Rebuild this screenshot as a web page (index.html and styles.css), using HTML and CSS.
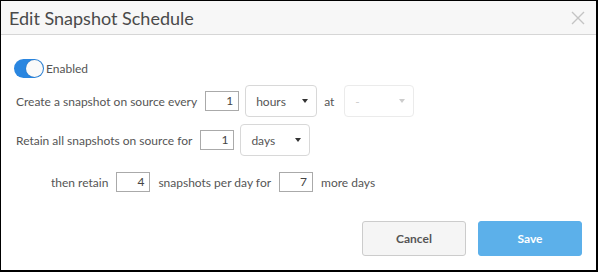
FILE: index.html
```html
<!DOCTYPE html>
<html lang="en">
<head>
    <meta charset="UTF-8">
    <title>Edit Snapshot Schedule</title>
    <link rel="stylesheet" href="styles.css">
</head>
<body>
    <div class="modal">
        <div class="modal-header">
            <div class="modal-title">Edit Snapshot Schedule</div>
            <div class="close">
                <svg width="14" height="14" viewBox="0 0 14 14"><path d="M1 1L13 13M13 1L1 13" stroke="#c4c4c4" stroke-width="1.4" fill="none"/></svg>
            </div>
        </div>
        <div class="modal-body">
            <div class="toggle-row">
                <div class="toggle"><div class="knob"></div></div>
                <span>Enabled</span>
            </div>
            <div class="row">
                <span>Create a snapshot on source every</span>
                <div class="num">1</div>
                <div class="select">hours <span class="caret"></span></div>
                <span class="at">at</span>
                <div class="select disabled">- <span class="caret"></span></div>
            </div>
            <div class="row row-retain">
                <span>Retain all snapshots on source for</span>
                <div class="num">1</div>
                <div class="select narrow">days <span class="caret"></span></div>
            </div>
            <div class="row row-then">
                <span>then retain</span>
                <div class="num">4</div>
                <span>snapshots per day for</span>
                <div class="num">7</div>
                <span>more days</span>
            </div>
        </div>
        <div class="modal-footer">
            <button class="btn btn-cancel">Cancel</button>
            <button class="btn btn-save">Save</button>
        </div>
    </div>
</body>
</html>
```

FILE: styles.css
```css
body {
    margin: 0;
    width: 598px;
    height: 272px;
    background: #000;
    font-family: 'Lato', sans-serif;
    color: #555;
}
.modal {
    margin: 1px 2px 2px 1px;
    height: 269px;
    background: #fff;
    display: flex;
    flex-direction: column;
}
.modal-header {
    height: 33px;
    background: #f7f7f7;
    border-bottom: 1px solid #d6d6d6;
    display: flex;
    align-items: center;
    justify-content: space-between;
    padding: 0 10px 0 8px;
}
.modal-title {
    font-size: 18px;
    color: #4a4a4a;
}
.close {
    display: flex;
    padding-right: 1px;
}
.modal-body {
    padding: 24px 0 0 13px;
    font-size: 12px;
}
.toggle-row {
    display: flex;
    align-items: center;
    gap: 2px;
    color: #555;
}
.toggle {
    width: 30px;
    height: 19px;
    border-radius: 10px;
    background: #2a86e0;
    position: relative;
}
.knob {
    position: absolute;
    right: 1px;
    top: 1px;
    width: 17px;
    height: 17px;
    border-radius: 50%;
    background: #fafafa;
    box-shadow: 0 0 1px rgba(0,0,0,0.3);
}
.row {
    display: flex;
    align-items: center;
    margin-top: 7px;
    padding-left: 2px;
}
.num {
    width: 27px;
    height: 18px;
    border: 1px solid #aaa;
    text-align: right;
    padding-right: 5px;
    line-height: 18px;
    color: #444;
    margin: 0 6px 0 8px;
}
.select {
    width: 52px;
    height: 30px;
    border: 1px solid #d8d8d8;
    border-radius: 4px;
    padding: 0 8px 0 10px;
    display: flex;
    align-items: center;
    justify-content: space-between;
    color: #555;
}
.caret {
    width: 0;
    height: 0;
    border-left: 3.5px solid transparent;
    border-right: 3.5px solid transparent;
    border-top: 4px solid #333;
}
.at {
    margin: 0 10px 0 7px;
}
.select.disabled {
    width: 50px;
    border-color: #ebebeb;
    color: #ccc;
}
.select.disabled .caret {
    border-top-color: #ccc;
}
.row-retain {
    margin-top: 7px;
}
.select.narrow {
    width: 50px;
}
.row-then {
    margin-top: 16px;
    padding-left: 37px;
}
.row-then .num {
    margin: 0 8px 0 8px;
}
.modal-footer {
    margin-top: auto;
    display: flex;
    justify-content: flex-end;
    gap: 12px;
    padding: 0 14px 14px 0;
}
.btn {
    width: 104px;
    height: 35px;
    border-radius: 3px;
    font-family: 'Lato', sans-serif;
    font-size: 12px;
    font-weight: bold;
    cursor: pointer;
}
.btn-cancel {
    background: #f5f5f5;
    border: 1px solid #ccc;
    color: #555;
}
.btn-save {
    background: #5cb0ea;
    border: 1px solid #5cb0ea;
    color: #fff;
}
```
